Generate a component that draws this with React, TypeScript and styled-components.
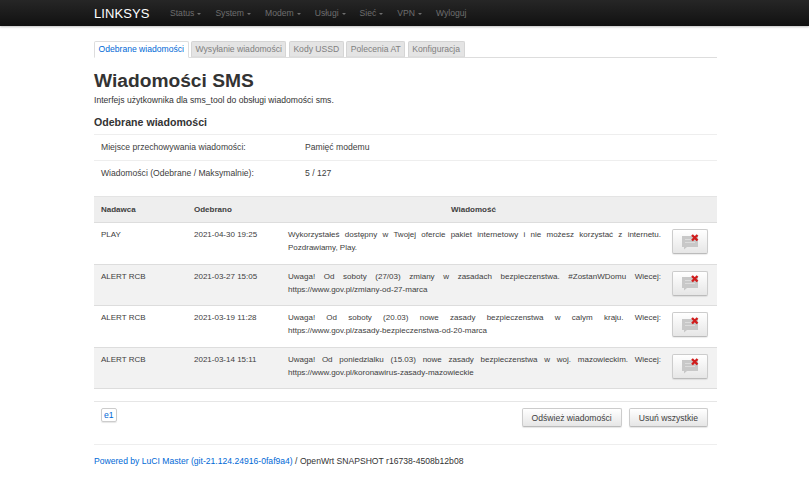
import styled, { createGlobalStyle } from 'styled-components'

const GlobalStyle = createGlobalStyle`
  html, body {
    margin: 0;
    padding: 0;
    background: #fff;
    color: #404040;
    font-family: "Liberation Sans", Arial, sans-serif;
    font-size: 8.6px;
    line-height: 13px;
  }
`

const NavBar = styled.header`
  height: 26px;
  background: linear-gradient(#262626, #111);
  box-shadow: 0 1px 2px rgba(0, 0, 0, 0.25);
  display: flex;
  align-items: center;
  padding-left: 94px;
`

const Brand = styled.a`
  color: #fff;
  font-size: 13px;
  width: 76px;
  letter-spacing: 0.1px;
`

const NavItem = styled.a`
  color: #6e6e6e;
  font-size: 8.6px;
  margin-right: 14px;
  display: flex;
  align-items: center;
  gap: 3px;
`

const Caret = styled.span`
  width: 0;
  height: 0;
  margin-top: 1px;
  border-left: 2px solid transparent;
  border-right: 2px solid transparent;
  border-top: 2px solid #6e6e6e;
`

const Main = styled.main`
  width: 623px;
  margin-left: 94px;
`

const Tabs = styled.ul`
  list-style: none;
  margin: 15px 0 0;
  padding: 0;
  height: 16px;
  display: flex;
  gap: 2.5px;
  border-bottom: 1px solid #ddd;
`

const Tab = styled.li<{ $active?: boolean }>`
  height: ${(p) => (p.$active ? 17 : 16)}px;
  box-sizing: border-box;
  padding: 0 3.5px;
  line-height: 15px;
  white-space: nowrap;
  color: ${(p) => (p.$active ? '#0069d6' : '#808080')};
  background: ${(p) => (p.$active ? '#fff' : '#e4e4e4')};
  border: 1px solid ${(p) => (p.$active ? '#ddd' : '#d5d5d5')};
  border-bottom-color: ${(p) => (p.$active ? '#fff' : '#ddd')};
  border-radius: 2px 2px 0 0;
`

const Title = styled.h2`
  margin: 14px 0 0;
  font-size: 19.2px;
  line-height: 18px;
  font-weight: bold;
  color: #333;
`

const Description = styled.p`
  margin: 4px 0 0;
  color: #333;
  line-height: 12px;
`

const SectionTitle = styled.h3`
  margin: 10px 0 0;
  font-size: 10.6px;
  line-height: 13px;
  font-weight: bold;
  color: #333;
`

const InfoBlock = styled.div`
  margin-top: 5px;
`

const InfoRow = styled.div`
  display: flex;
  height: 25px;
  align-items: center;
  padding-left: 7px;
  border-top: 1px solid #eee;
`

const InfoLabel = styled.div`
  width: 204px;
`

const MessageTable = styled.table`
  width: 100%;
  margin-top: 10px;
  border-collapse: collapse;
  table-layout: fixed;
`

const HeadCell = styled.th<{ $center?: boolean }>`
  height: 26px;
  padding: 0 7px;
  box-sizing: border-box;
  background: #eee;
  border-top: 1px solid #e4e4e4;
  border-bottom: 1px solid #ddd;
  font-weight: bold;
  font-size: 8px;
  color: #404040;
  text-align: ${(p) => (p.$center ? 'center' : 'left')};
`

const Row = styled.tr<{ $shaded?: boolean }>`
  background: ${(p) => (p.$shaded ? '#f2f2f2' : '#fff')};
  border-bottom: 1px solid #ddd;
`

const Cell = styled.td`
  height: 41.5px;
  padding: 5px 7px 0;
  box-sizing: border-box;
  vertical-align: top;
  font-size: 8px;
`

const TextCell = styled(Cell)`
  text-align: justify;
  padding: 5px 6px 0 8px;
`

const ActionCell = styled(Cell)`
  padding: 6px 9px 0 0;
  text-align: right;
`

const DeleteButton = styled.button`
  width: 36px;
  height: 25px;
  padding: 0;
  display: inline-flex;
  align-items: center;
  justify-content: center;
  border: 1px solid #ccc;
  border-bottom-color: #bbb;
  border-radius: 2px;
  background: linear-gradient(#fff, #e6e6e6);
  box-shadow: 0 1px 1px rgba(0, 0, 0, 0.08);
`

const BottomBar = styled.div`
  margin-top: 12px;
  height: 36px;
  border-top: 1px solid #e6e6e6;
  border-bottom: 1px solid #eee;
  display: flex;
  justify-content: space-between;
  padding: 6px 9px 0 7px;
`

const ModemBadge = styled.span`
  align-self: flex-start;
  padding: 0 2px;
  height: 14px;
  line-height: 13px;
  box-sizing: border-box;
  color: #0069d6;
  border: 1px solid #ccc;
  border-radius: 2px;
  box-shadow: 0 1px 1px rgba(0, 0, 0, 0.1);
`

const ButtonGroup = styled.div`
  display: flex;
  gap: 7px;
  align-items: flex-start;
`

const ActionButton = styled.button`
  height: 19px;
  padding: 0 9px;
  font-family: inherit;
  font-size: 8.6px;
  color: #404040;
  border: 1px solid #ccc;
  border-bottom-color: #bbb;
  border-radius: 2px;
  background: linear-gradient(#fff, #e6e6e6);
  box-shadow: 0 1px 1px rgba(0, 0, 0, 0.1);
`

const Footer = styled.footer`
  margin-top: 10px;
  line-height: 13px;
  color: #333;
`

const FooterLink = styled.a`
  color: #0069d6;
`

const DeleteIcon = () => (
  <svg width="22" height="16" viewBox="0 0 22 16">
    <path d="M3 2h16v11H8l-3 2.5V13H3z" fill="#c8c8c8" />
    <path d="M6 5.5h10M6 8.5h10" stroke="#dcdcdc" strokeWidth="1" />
    <path d="M13 1l5.5 5.5M18.5 1L13 6.5" stroke="#d01c1c" strokeWidth="2.4" />
  </svg>
)

const navItems = ['Status', 'System', 'Modem', 'Usługi', 'Sieć', 'VPN']
const tabs = ['Odebrane wiadomości', 'Wysyłanie wiadomości', 'Kody USSD', 'Polecenia AT', 'Konfiguracja']
const messages = [
  {
    from: 'PLAY',
    date: '2021-04-30 19:25',
    text: 'Wykorzystałeś dostępny w Twojej ofercie pakiet internetowy i nie możesz korzystać z internetu. Pozdrawiamy, Play.',
  },
  {
    from: 'ALERT RCB',
    date: '2021-03-27 15:05',
    text: 'Uwaga! Od soboty (27/03) zmiany w zasadach bezpieczenstwa. #ZostanWDomu Wiecej: https://www.gov.pl/zmiany-od-27-marca',
  },
  {
    from: 'ALERT RCB',
    date: '2021-03-19 11:28',
    text: 'Uwaga! Od soboty (20.03) nowe zasady bezpieczenstwa w calym kraju. Wiecej: https://www.gov.pl/zasady-bezpieczenstwa-od-20-marca',
  },
  {
    from: 'ALERT RCB',
    date: '2021-03-14 15:11',
    text: 'Uwaga! Od poniedzialku (15.03) nowe zasady bezpieczenstwa w woj. mazowieckim. Wiecej: https://www.gov.pl/koronawirus-zasady-mazowieckie',
  },
]

export default function App() {
  return (
    <>
      <GlobalStyle />
      <NavBar>
        <Brand>LINKSYS</Brand>
        {navItems.map((item) => (
          <NavItem key={item}>
            {item}
            <Caret />
          </NavItem>
        ))}
        <NavItem>Wyloguj</NavItem>
      </NavBar>
      <Main>
        <Tabs>
          {tabs.map((tab, i) => (
            <Tab key={tab} $active={i === 0}>
              {tab}
            </Tab>
          ))}
        </Tabs>
        <Title>Wiadomości SMS</Title>
        <Description>Interfejs użytkownika dla sms_tool do obsługi wiadomości sms.</Description>
        <SectionTitle>Odebrane wiadomości</SectionTitle>
        <InfoBlock>
          <InfoRow>
            <InfoLabel>Miejsce przechowywania wiadomości:</InfoLabel>
            Pamięć modemu
          </InfoRow>
          <InfoRow>
            <InfoLabel>Wiadomości (Odebrane / Maksymalnie):</InfoLabel>
            5 / 127
          </InfoRow>
        </InfoBlock>
        <MessageTable>
          <colgroup>
            <col width="93" />
            <col width="93" />
            <col />
            <col width="50" />
          </colgroup>
          <thead>
            <tr>
              <HeadCell>Nadawca</HeadCell>
              <HeadCell>Odebrano</HeadCell>
              <HeadCell $center>Wiadomość</HeadCell>
              <HeadCell />
            </tr>
          </thead>
          <tbody>
            {messages.map((m, i) => (
              <Row key={m.date} $shaded={i % 2 === 1}>
                <Cell>{m.from}</Cell>
                <Cell>{m.date}</Cell>
                <TextCell>{m.text}</TextCell>
                <ActionCell>
                  <DeleteButton>
                    <DeleteIcon />
                  </DeleteButton>
                </ActionCell>
              </Row>
            ))}
          </tbody>
        </MessageTable>
        <BottomBar>
          <ModemBadge>e1</ModemBadge>
          <ButtonGroup>
            <ActionButton>Odśwież wiadomości</ActionButton>
            <ActionButton>Usuń wszystkie</ActionButton>
          </ButtonGroup>
        </BottomBar>
        <Footer>
          <FooterLink>Powered by LuCI Master (git-21.124.24916-0faf9a4)</FooterLink> / OpenWrt SNAPSHOT r16738-4508b12b08
        </Footer>
      </Main>
    </>
  )
}
